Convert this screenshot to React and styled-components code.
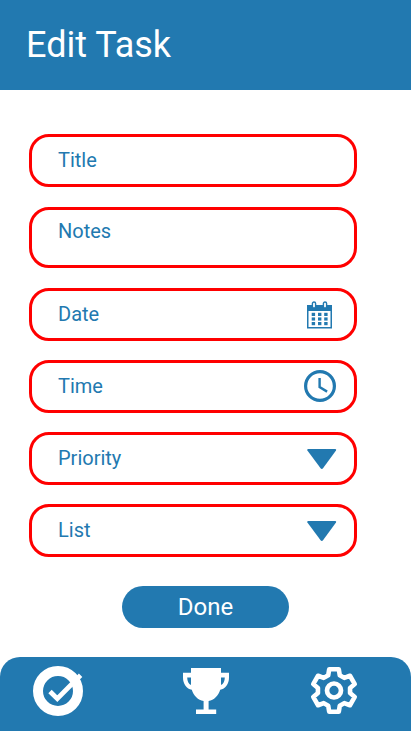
import React from "react";
import styled, { createGlobalStyle } from "styled-components";

const BLUE = "#2279b0";

const GlobalStyle = createGlobalStyle`
  * { box-sizing: border-box; }
  body { margin: 0; background: #fff; }
  button { font: inherit; border: 0; padding: 0; background: none; cursor: pointer; }
`;

const Screen = styled.div`
  display: flex;
  flex-direction: column;
  width: 100%;
  height: 100vh;
  overflow: hidden;
  background: #fff;
  font-family: Roboto, sans-serif;
`;

const Header = styled.header`
  display: flex;
  align-items: center;
  flex: none;
  height: 90px;
  padding-left: 26px;
  background: ${BLUE};
`;

const Heading = styled.h1`
  margin: 0;
  color: #fff;
  font-size: 36px;
  font-weight: 400;
  line-height: 42px;
`;

const Form = styled.main`
  display: flex;
  flex-direction: column;
  flex: 1;
  padding: 44px 54px 0 29px;
`;

const Field = styled.div`
  display: flex;
  align-items: ${(p) => (p.$tall ? "flex-start" : "center")};
  justify-content: space-between;
  flex: none;
  height: ${(p) => (p.$tall ? 61 : 53)}px;
  margin-bottom: ${(p) => p.$gap || 19}px;
  padding: ${(p) => (p.$tall ? "9px" : "0")} ${(p) => p.$end || 18}px 1px 26px;
  border: 3px solid #ff0000;
  border-radius: 20px;
`;

const Label = styled.span`
  color: ${BLUE};
  font-size: 20px;
  line-height: 24px;
`;

const Icon = styled.svg`
  display: block;
  flex: none;
  overflow: visible;
`;

const DoneButton = styled.button`
  && {
    align-self: flex-start;
    width: 167px;
    height: 42px;
    margin: 10px 0 0 93px;
    border-radius: 21px;
    background: ${BLUE};
    color: #fff;
    font-size: 24px;
    line-height: 42px;
  }
`;

const NavBar = styled.nav`
  display: flex;
  align-items: flex-start;
  justify-content: space-between;
  flex: none;
  height: 74px;
  padding: 9px 54px 0 33px;
  border-radius: 20px 20px 0 0;
  background: ${BLUE};
`;

const NavButton = styled.button`
  && {
    display: flex;
    padding-top: ${(p) => p.$drop || 0}px;
    padding-left: ${(p) => p.$inset || 0}px;
  }
`;

const CalendarIcon = () => (
  <Icon width="25" height="30" viewBox="0 -2 25 30">
    <path fill={BLUE} fillRule="evenodd" d="M0 4h25v23.500H0zM1.500 10v16h22V10z" />
    <g fill="#fff" stroke={BLUE} strokeWidth="1.400">
      <rect x="5.400" y="1" width="3.200" height="6" rx="1.600" />
      <rect x="16.400" y="1" width="3.200" height="6" rx="1.600" />
    </g>
    <g fill={BLUE}>
      {[11.8, 16.4, 21].map((y) =>
        [4.7, 11, 17.2].map((x) => (
          <rect key={`${x}-${y}`} x={x} y={y} width="3.400" height="3.200" />
        ))
      )}
    </g>
  </Icon>
);

const ClockIcon = () => (
  <Icon width="32" height="32" viewBox="0 0 32 32" fill="none" stroke={BLUE}>
    <circle cx="16" cy="16" r="14.400" strokeWidth="3.200" />
    <path d="M15.600 8v9.100l7.500 4.500" strokeWidth="2.400" />
  </Icon>
);

const ArrowIcon = () => (
  <Icon width="30" height="22" viewBox="0 -2 30 22">
    <path
      fill={BLUE}
      d="M1 0h27.500q1.200.5.5 1.600L16.200 19q-1.400 1.800-2.800 0L.4 1.600Q-.2.4 1 0z"
    />
  </Icon>
);

const CheckIcon = () => (
  <Icon width="50" height="50" viewBox="0 0 50 50" fill="none" stroke="#fff">
    <circle cx="25" cy="25" r="20" strokeWidth="10" />
    <path d="M17 25.500l7.300 7.200L47.600 9.200" strokeWidth="4.800" />
  </Icon>
);

const TrophyIcon = () => (
  <Icon width="46" height="46" viewBox="0 0 46 46">
    <path
      fill="#fff"
      fillRule="evenodd"
      d="M8 0h30v4.800h8v4.600C46 16 42.300 20.700 37.200 21.700 35.300 27.700 31 32 25.600 33.100V41.400H33.200V46H13V41.400H20.600V33.100C15 32 10.700 27.700 8.800 21.700 3.700 20.700 0 16 0 9.400V4.800H8zM4.200 9.400C4.200 13 5.600 15.800 8 17V9.400zM38 9.400V17C40.400 15.800 41.800 13 41.800 9.400z"
    />
  </Icon>
);

const GearIcon = () => (
  <Icon
    width="46"
    height="47"
    viewBox="-23 -23.500 46 47"
    fill="none"
    stroke="#fff"
    strokeLinejoin="round"
  >
    <path
      strokeWidth="4.600"
      d="M-5.800-15.200L-4.800-21.200H4.800L5.800-15.200 10.260-12.620 15.960-14.760 20.760-6.440 16.060-2.580V2.580L20.760 6.440 15.960 14.760 10.260 12.620 5.800 15.200 4.800 21.200H-4.800L-5.800 15.200-10.260 12.620-15.960 14.760-20.760 6.440-16.060 2.580V-2.580L-20.760-6.440-15.960-14.760-10.260-12.620z"
    />
    <circle r="7" strokeWidth="4.700" />
  </Icon>
);

export default function App() {
  return (
    <Screen>
      <GlobalStyle />
      <Header>
        <Heading>Edit Task</Heading>
      </Header>
      <Form>
        <Field $gap={20}>
          <Label>Title</Label>
        </Field>
        <Field $tall $gap={20}>
          <Label>Notes</Label>
        </Field>
        <Field $end={22}>
          <Label>Date</Label>
          <CalendarIcon />
        </Field>
        <Field>
          <Label>Time</Label>
          <ClockIcon />
        </Field>
        <Field $end={17}>
          <Label>Priority</Label>
          <ArrowIcon />
        </Field>
        <Field $end={17}>
          <Label>List</Label>
          <ArrowIcon />
        </Field>
        <DoneButton type="button">Done</DoneButton>
      </Form>
      <NavBar>
        <NavButton type="button" aria-label="Tasks">
          <CheckIcon />
        </NavButton>
        <NavButton type="button" aria-label="Achievements" $drop={2} $inset={18}>
          <TrophyIcon />
        </NavButton>
        <NavButton type="button" aria-label="Settings" $drop={1}>
          <GearIcon />
        </NavButton>
      </NavBar>
    </Screen>
  );
}
